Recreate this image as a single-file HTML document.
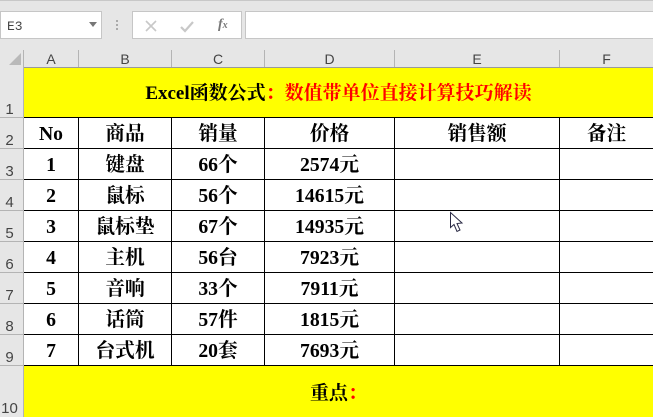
<!DOCTYPE html>
<html><head><meta charset="utf-8">
<style>
html,body{margin:0;padding:0;background:#fff}
#p{position:relative;width:653px;height:417px;overflow:hidden;background:#fff;font-family:"Liberation Serif","Noto Serif CJK SC",serif}
#p div{position:absolute;box-sizing:border-box}
.t{font-weight:bold;color:#000;font-size:19.7px;text-align:center;line-height:20px;white-space:nowrap;height:20px}
.ch{top:50px;height:18px;font:14px/18px "Liberation Sans",sans-serif;color:#444;text-align:center}
.rh{left:0;width:19px;font:15px/16px "Liberation Sans",sans-serif;color:#444;text-align:center}
.h{background:#000;height:1px;left:24px;width:629px}
.v{background:#000;width:1px;top:117px;height:249px}
.rl{background:#b4b4b4;height:1px;left:0;width:24px}
.cl{background:#b4b4b4;width:1px;top:50px;height:17px}
</style></head><body>
<div id="p">
<div style="left:0;top:0;width:653px;height:67px;background:#e6e6e6"></div>
<div style="left:0;top:0;width:653px;height:1px;background:#c8c8c8"></div>
<div style="left:0;top:11px;width:102px;height:28px;background:#fff;border:1px solid #c6c6c6"></div>
<div style="left:7px;top:18px;font:13px/17px 'Liberation Mono',monospace;color:#444">E3</div>
<div style="left:89px;top:22px;width:0;height:0;border-left:4px solid transparent;border-right:4px solid transparent;border-top:5px solid #777"></div>
<div style="left:116px;top:20px;width:2px;height:2px;background:#aaa"></div>
<div style="left:116px;top:24px;width:2px;height:2px;background:#aaa"></div>
<div style="left:116px;top:28px;width:2px;height:2px;background:#aaa"></div>
<div style="left:132px;top:11px;width:110px;height:28px;background:#fff;border:1px solid #c6c6c6"></div>
<svg style="position:absolute;left:144px;top:18px" width="70" height="16" viewBox="0 0 70 16"><path d="M2 3l10 10M12 3l-10 10" stroke="#c8c8c8" stroke-width="1.6" fill="none"/><path d="M37 9l4 4 8-9" stroke="#c8c8c8" stroke-width="2.2" fill="none"/></svg>
<div style="left:218px;top:16px;font:italic bold 14px/18px 'Liberation Serif',serif;color:#777">f<span style="font-size:10px">x</span></div>
<div style="left:245px;top:11px;width:408px;height:28px;background:#fff;border:1px solid #c6c6c6;border-right:0"></div>
<svg style="position:absolute;left:8px;top:52px" width="14" height="14"><path d="M13 1V13H1Z" fill="#b9b9b9"/></svg>
<div style="left:0;top:67px;width:24px;height:350px;background:#e6e6e6"></div>
<div style="left:24px;top:67px;width:629px;height:1px;background:#9a9a9a"></div>
<div style="left:23px;top:50px;width:1px;height:367px;background:#b4b4b4"></div>
<div class="cl" style="left:78px"></div><div class="cl" style="left:171px"></div><div class="cl" style="left:264px"></div><div class="cl" style="left:394px"></div><div class="cl" style="left:559px"></div>
<div class="ch" style="left:24px;width:54px">A</div>
<div class="ch" style="left:79px;width:92px">B</div>
<div class="ch" style="left:172px;width:92px">C</div>
<div class="ch" style="left:265px;width:129px">D</div>
<div class="ch" style="left:395px;width:164px">E</div>
<div class="ch" style="left:560px;width:93px">F</div>
<div class="rl" style="top:117px"></div><div class="rl" style="top:148px"></div><div class="rl" style="top:179px"></div><div class="rl" style="top:210px"></div><div class="rl" style="top:241px"></div><div class="rl" style="top:272px"></div><div class="rl" style="top:303px"></div><div class="rl" style="top:334px"></div><div class="rl" style="top:365px"></div>
<div class="rh" style="top:102px">1</div><div class="rh" style="top:133px">2</div><div class="rh" style="top:164px">3</div><div class="rh" style="top:195px">4</div><div class="rh" style="top:226px">5</div><div class="rh" style="top:257px">6</div><div class="rh" style="top:288px">7</div><div class="rh" style="top:319px">8</div><div class="rh" style="top:350px">9</div><div class="rh" style="top:401px">10</div>
<div style="left:24px;top:68px;width:629px;height:49px;background:#ff0"></div>
<div style="left:24px;top:366px;width:629px;height:51px;background:#ff0"></div>
<div class="h" style="top:117px"></div><div class="h" style="top:148px"></div><div class="h" style="top:179px"></div><div class="h" style="top:210px"></div><div class="h" style="top:241px"></div><div class="h" style="top:272px"></div><div class="h" style="top:303px"></div><div class="h" style="top:334px"></div><div class="h" style="top:365px"></div>
<div class="v" style="left:78px"></div><div class="v" style="left:171px"></div><div class="v" style="left:264px"></div><div class="v" style="left:394px"></div><div class="v" style="left:559px"></div>
<div class="t" style="left:24px;top:84px;width:629px;font-size:19px">Excel函数公式<span style="color:#f00">：数值带单位直接计算技巧解读</span></div>
<div class="t" style="left:24px;top:124px;width:54px">No</div><div class="t" style="left:79px;top:124px;width:92px">商品</div><div class="t" style="left:172px;top:124px;width:92px">销量</div><div class="t" style="left:265px;top:124px;width:129px">价格</div><div class="t" style="left:395px;top:124px;width:164px">销售额</div><div class="t" style="left:560px;top:124px;width:93px">备注</div>
<div class="t" style="left:24px;top:155px;width:54px">1</div><div class="t" style="left:79px;top:155px;width:92px">键盘</div><div class="t" style="left:172px;top:155px;width:92px">66个</div><div class="t" style="left:265px;top:155px;width:129px">2574元</div>
<div class="t" style="left:24px;top:186px;width:54px">2</div><div class="t" style="left:79px;top:186px;width:92px">鼠标</div><div class="t" style="left:172px;top:186px;width:92px">56个</div><div class="t" style="left:265px;top:186px;width:129px">14615元</div>
<div class="t" style="left:24px;top:217px;width:54px">3</div><div class="t" style="left:79px;top:217px;width:92px">鼠标垫</div><div class="t" style="left:172px;top:217px;width:92px">67个</div><div class="t" style="left:265px;top:217px;width:129px">14935元</div>
<div class="t" style="left:24px;top:248px;width:54px">4</div><div class="t" style="left:79px;top:248px;width:92px">主机</div><div class="t" style="left:172px;top:248px;width:92px">56台</div><div class="t" style="left:265px;top:248px;width:129px">7923元</div>
<div class="t" style="left:24px;top:279px;width:54px">5</div><div class="t" style="left:79px;top:279px;width:92px">音响</div><div class="t" style="left:172px;top:279px;width:92px">33个</div><div class="t" style="left:265px;top:279px;width:129px">7911元</div>
<div class="t" style="left:24px;top:310px;width:54px">6</div><div class="t" style="left:79px;top:310px;width:92px">话筒</div><div class="t" style="left:172px;top:310px;width:92px">57件</div><div class="t" style="left:265px;top:310px;width:129px">1815元</div>
<div class="t" style="left:24px;top:341px;width:54px">7</div><div class="t" style="left:79px;top:341px;width:92px">台式机</div><div class="t" style="left:172px;top:341px;width:92px">20套</div><div class="t" style="left:265px;top:341px;width:129px">7693元</div>
<div class="t" style="left:24px;top:384px;width:629px;font-size:19px">重点<span style="color:#f00">：</span></div>
<svg style="position:absolute;left:449px;top:211px" width="16" height="24" viewBox="0 0 16 24"><path d="M1.5 1.5V16.5L5 13.5L8 20.5L11 19L8 12.5L13 12Z" fill="#fff" stroke="#2b2b45" stroke-width="1"/></svg>
</div>
</body></html>
